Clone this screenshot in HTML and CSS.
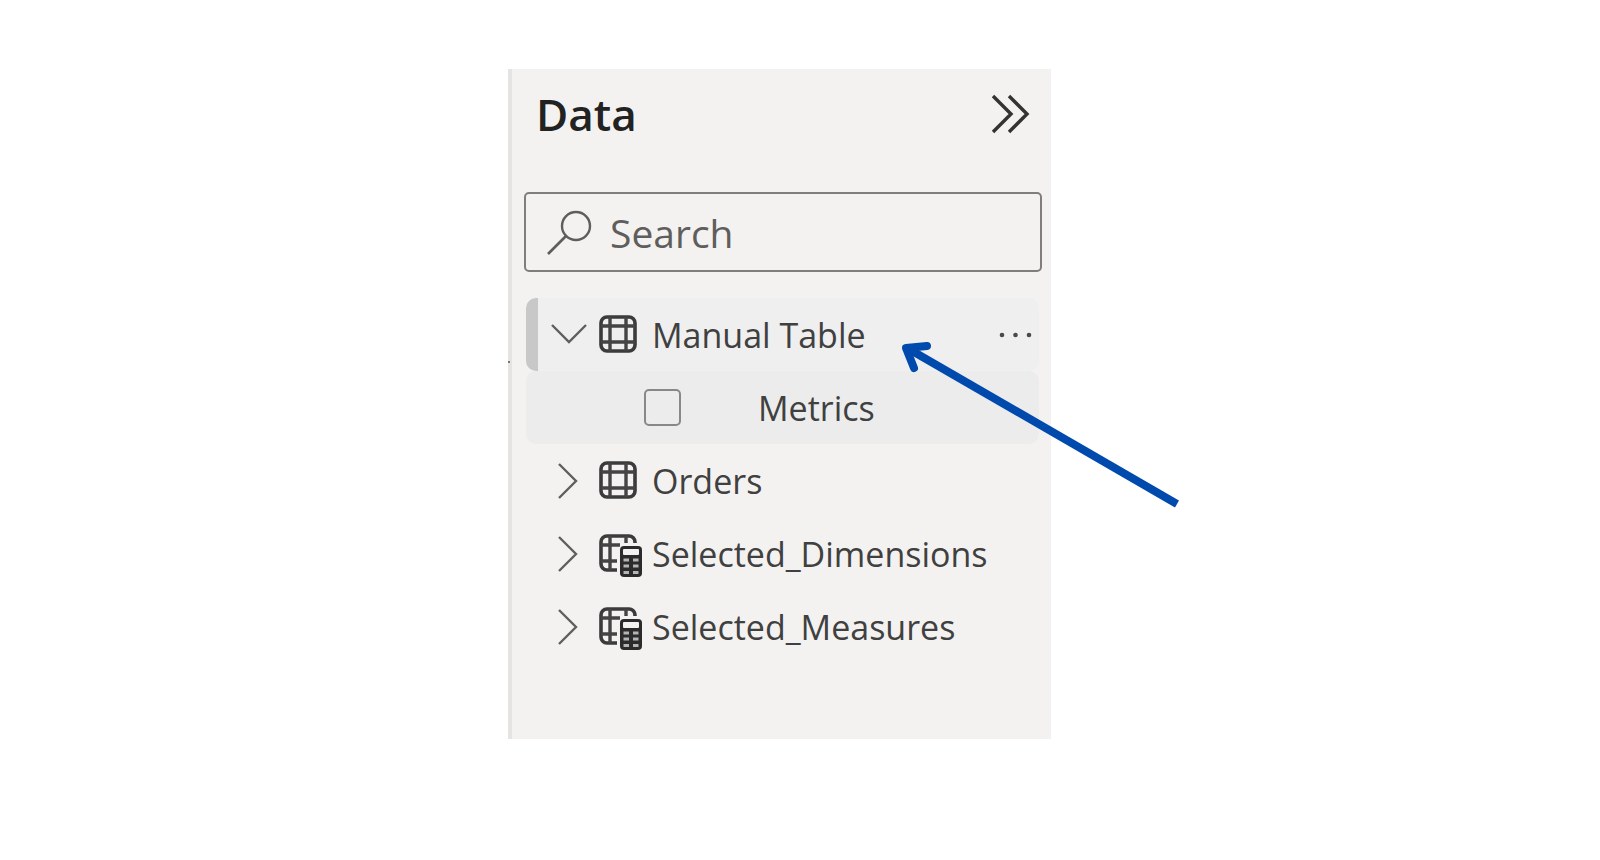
FILE: index.html
```html
<!DOCTYPE html>
<html lang="en">
<head>
    <meta charset="UTF-8">
    <meta name="viewport" content="width=device-width, initial-scale=1.0">
    <title>Data pane</title>
    <link rel="stylesheet" href="styles.css">
</head>
<body>
    <!-- shared icons -->
    <svg class="sprite" aria-hidden="true">
        <symbol id="icon-down" viewBox="0 0 36 36">
            <path d="M1 8 L18 25 L35 8" fill="none" stroke="#5f5f5f" stroke-width="2.4"/>
        </symbol>
        <symbol id="icon-right" viewBox="0 0 36 36">
            <path d="M8 1 L25 18 L8 35" fill="none" stroke="#5f5f5f" stroke-width="2.4"/>
        </symbol>
        <symbol id="icon-table" viewBox="0 0 44 48">
            <rect x="2" y="6" width="34" height="34" rx="6" fill="none" stroke="#3b3b3b" stroke-width="3.6"/>
            <path d="M11 6 V40 M27 6 V40 M2 15 H36 M2 31 H36" stroke="#444" stroke-width="3.4"/>
        </symbol>
        <symbol id="icon-calc-table" viewBox="0 0 44 48">
            <path d="M36 13 V12 A6 6 0 0 0 30 6 H8 A6 6 0 0 0 2 12 V34 A6 6 0 0 0 8 40 H18" fill="none" stroke="#3b3b3b" stroke-width="3.6"/>
            <path d="M11 6 V40 M27 6 V13 M2 15 H21 M2 31 H18" fill="none" stroke="#444" stroke-width="3.4"/>
            <rect x="21" y="16" width="22" height="31" rx="4" fill="#2b2b2b"/>
            <rect x="24" y="19" width="16" height="6" rx="1" fill="#f3f2f1"/>
            <path d="M24.5 30 H30 M34 30 H39.5 M24.5 36 H30 M34 36 H39.5 M24.5 42.5 H30 M34 42.5 H39.5" stroke="#b4b4b4" stroke-width="3"/>
        </symbol>
    </svg>

    <main class="page">
        <section class="data-pane">
            <header class="pane-header">
                <h1>Data</h1>
                <button class="collapse" type="button" aria-label="Collapse pane">
                    <svg width="40" height="40" viewBox="0 0 40 40">
                        <path d="M3 2 L21 20 L3 38 M19 2 L37 20 L19 38" fill="none" stroke="#333" stroke-width="3.4"/>
                    </svg>
                </button>
            </header>

            <label class="search">
                <svg width="46" height="46" viewBox="0 0 46 46" aria-hidden="true">
                    <circle cx="29" cy="17" r="14" fill="none" stroke="#605e5c" stroke-width="2.4"/>
                    <path d="M19 27 L1 45" stroke="#605e5c" stroke-width="2.6"/>
                </svg>
                <input type="search" placeholder="Search" aria-label="Search">
            </label>

            <ul class="tree">
                <li class="row selected">
                    <button class="table-name" type="button" aria-expanded="true">
                        <svg class="chevron"><use href="#icon-down"/></svg>
                        <svg class="table-icon"><use href="#icon-table"/></svg>
                        <span>Manual Table</span>
                    </button>
                    <button class="more" type="button" aria-label="More options">
                        <svg width="34" height="8" viewBox="0 0 34 8" fill="#4a4a4a">
                            <circle cx="3" cy="4" r="2.3"/>
                            <circle cx="16.5" cy="4" r="2.3"/>
                            <circle cx="30" cy="4" r="2.3"/>
                        </svg>
                    </button>
                </li>
                <li class="row field">
                    <input type="checkbox" id="metrics">
                    <label for="metrics">Metrics</label>
                </li>
                <li class="row">
                    <button class="table-name" type="button" aria-expanded="false">
                        <svg class="chevron"><use href="#icon-right"/></svg>
                        <svg class="table-icon"><use href="#icon-table"/></svg>
                        <span>Orders</span>
                    </button>
                </li>
                <li class="row">
                    <button class="table-name" type="button" aria-expanded="false">
                        <svg class="chevron"><use href="#icon-right"/></svg>
                        <svg class="table-icon"><use href="#icon-calc-table"/></svg>
                        <span>Selected_Dimensions</span>
                    </button>
                </li>
                <li class="row">
                    <button class="table-name" type="button" aria-expanded="false">
                        <svg class="chevron"><use href="#icon-right"/></svg>
                        <svg class="table-icon"><use href="#icon-calc-table"/></svg>
                        <span>Selected_Measures</span>
                    </button>
                </li>
            </ul>

            <span class="speck"></span>

            <!-- arrow pointing at Manual Table -->
            <svg class="arrow" width="284" height="170" viewBox="0 0 284 170" aria-hidden="true">
                <path d="M7 10 L277 166" fill="none" stroke="#004aad" stroke-width="8"/>
                <path d="M27 8 L6 10 L14 30" fill="none" stroke="#004aad" stroke-width="8" stroke-linecap="round" stroke-linejoin="round"/>
            </svg>
        </section>
    </main>
</body>
</html>
```

FILE: styles.css
```css
* {
    box-sizing: border-box;
}

body {
    margin: 0;
    background: #fff;
    color: #404040;
    font-family: "Open Sans", "Noto Sans", sans-serif;
}

.sprite {
    position: absolute;
    width: 0;
    height: 0;
}

.page {
    display: flex;
    justify-content: center;
    padding: 69px 41px 40px 0;
}

.data-pane {
    position: relative;
    width: 100%;
    max-width: 543px;
    padding: 0 9px 76px 12px;
    background: #f3f2f1;
    border-left: 4px solid #e5e4e3;
}

.pane-header {
    display: flex;
    align-items: center;
    justify-content: space-between;
    height: 89px;
    margin-bottom: 34px;
    padding: 0 12px;
}

h1 {
    margin: 0;
    color: #222;
    font-size: 44px;
    font-weight: 600;
    line-height: 60px;
}

button {
    padding: 0;
    border: 0;
    background: none;
    color: inherit;
    font: inherit;
    cursor: pointer;
}

svg {
    display: block;
    flex: none;
}

.search {
    display: flex;
    align-items: center;
    gap: 17px;
    height: 80px;
    padding: 0 21px;
    border: 2px solid #7f7e7c;
    border-radius: 5px;
}

.search input {
    flex: 1;
    min-width: 0;
    padding: 0;
    border: 0;
    outline: 0;
    background: none;
    color: #605e5c;
    font: inherit;
    font-size: 39px;
}

.search input::placeholder {
    color: #605e5c;
    opacity: 1;
}

.tree {
    margin: 26px 3px 0 2px;
    padding: 0;
    list-style: none;
    font-size: 34px;
    line-height: 48px;
}

.row {
    display: flex;
    align-items: center;
    justify-content: space-between;
    height: 73px;
    padding: 0 6px 0 25px;
    border-radius: 10px;
}

.selected {
    padding-left: 13px;
    background: #efefef;
    border-left: 12px solid #c8c8c8;
}

.table-name {
    display: flex;
    align-items: center;
}

.chevron {
    width: 36px;
    height: 36px;
    margin-right: 12px;
}

.table-icon {
    width: 44px;
    height: 48px;
    margin-right: 9px;
}

.field {
    justify-content: flex-start;
    gap: 77px;
    padding-left: 118px;
    background: #ececec;
}

.field input {
    appearance: none;
    width: 37px;
    height: 37px;
    margin: 0;
    border: 2px solid #8a8886;
    border-radius: 5px;
}

.speck {
    position: absolute;
    top: 292px;
    left: -4px;
    width: 2px;
    height: 2px;
    background: #777;
}

.arrow {
    position: absolute;
    top: 269px;
    left: 388px;
}
```
